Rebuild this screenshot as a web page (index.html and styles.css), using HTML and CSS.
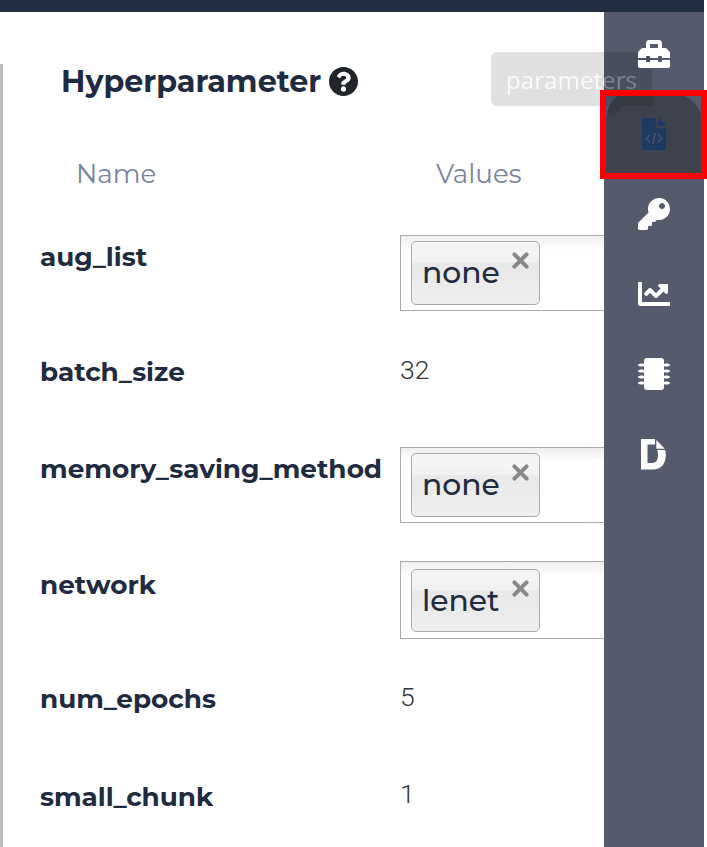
FILE: index.html
```
<!DOCTYPE html>
<html lang="en">
<head>
<meta charset="utf-8">
<title>Hyperparameter</title>
<link rel="stylesheet" href="styles.css">
</head>
<body>
<header class="topbar"></header>
<div class="shell">
  <main class="panel">
    <h1 class="title"><span class="title-text">Hyperparameter</span>
      <svg class="help" viewBox="8 8 496 496"><path d="M504 256c0 136.997-111.043 248-248 248S8 392.997 8 256C8 119.083 119.043 8 256 8s248 111.083 248 248zM262.655 90c-54.497 0-89.255 22.957-116.549 63.758-3.536 5.286-2.353 12.415 2.715 16.258l34.699 26.31c5.205 3.947 12.621 3.008 16.665-2.122 17.864-22.658 30.113-35.797 57.303-35.797 20.429 0 45.698 13.148 45.698 32.958 0 14.976-12.363 22.667-32.534 33.976C247.128 238.528 216 254.941 216 296v4c0 6.627 5.373 12 12 12h56c6.627 0 12-5.373 12-12v-1.333c0-28.462 83.186-29.647 83.186-106.667 0-58.002-60.165-102-116.531-102zM256 338c-25.365 0-46 20.635-46 46 0 25.364 20.635 46 46 46s46-20.636 46-46c0-25.365-20.635-46-46-46z"/></svg>
    </h1>
    <div class="row head"><div>Name</div><div>Values</div></div>
    <div class="row r-aug"><div class="name">aug_list</div><div class="select"><div class="chip">none<svg class="x" viewBox="0 0 17 17"><path d="M3 3l11 11M14 3L3 14"/></svg></div></div></div>
    <div class="row r-batch"><div class="name">batch_size</div><div class="num">32</div></div>
    <div class="row r-memory"><div class="name">memory_saving_method</div><div class="select"><div class="chip">none<svg class="x" viewBox="0 0 17 17"><path d="M3 3l11 11M14 3L3 14"/></svg></div></div></div>
    <div class="row r-network"><div class="name">network</div><div class="select"><div class="chip">lenet<svg class="x" viewBox="0 0 17 17"><path d="M3 3l11 11M14 3L3 14"/></svg></div></div></div>
    <div class="row r-epochs"><div class="name">num_epochs</div><div class="num">5</div></div>
    <div class="row r-chunk"><div class="name">small_chunk</div><div class="num">1</div></div>
  </main>
  <nav class="sidebar">
    <div class="item"><svg viewBox="0 0 512 512"><path d="M502.63 214.63l-45.25-45.25c-6-6-14.14-9.37-22.63-9.37H384V80c0-26.51-21.49-48-48-48H176c-26.51 0-48 21.49-48 48v80H77.25c-8.49 0-16.62 3.37-22.63 9.37L9.37 214.63c-6 6-9.37 14.14-9.37 22.63V320h128v-16c0-8.84 7.16-16 16-16h32c8.84 0 16 7.16 16 16v16h128v-16c0-8.84 7.16-16 16-16h32c8.84 0 16 7.16 16 16v16h128v-82.75c0-8.48-3.37-16.62-9.37-22.62zM320 160H192V96h128v64zm64 208c0 8.84-7.16 16-16 16h-32c-8.84 0-16-7.16-16-16v-16H192v16c0 8.84-7.16 16-16 16h-32c-8.84 0-16-7.16-16-16v-16H0v96c0 17.67 14.33 32 32 32h448c17.67 0 32-14.33 32-32v-96H384v16z"/></svg></div>
    <div class="item active"><svg viewBox="-64 0 512 512"><path d="M384 121.941V128H256V0h6.059c6.365 0 12.47 2.529 16.971 7.029l97.941 97.941A24.005 24.005 0 0 1 384 121.941zM248 160c-13.2 0-24-10.8-24-24V0H24C10.745 0 0 10.745 0 24v464c0 13.255 10.745 24 24 24h336c13.255 0 24-10.745 24-24V160H248z"/><path class="code" d="M126 270l-56 58 56 58M258 270l56 58-56 58M218 236l-50 180"/></svg></div>
    <div class="item"><svg viewBox="0 0 512 512"><path d="M512 176.001C512 273.203 433.202 352 336 352c-11.22 0-22.19-1.062-32.827-3.069l-24.012 27.014A23.999 23.999 0 0 1 261.223 384H224v40c0 13.255-10.745 24-24 24h-40v40c0 13.255-10.745 24-24 24H24c-13.255 0-24-10.745-24-24v-78.059c0-6.365 2.529-12.47 7.029-16.971l161.802-161.802C163.108 213.814 160 195.271 160 176 160 78.798 238.797.001 335.999 0 433.488-.001 512 78.511 512 176.001zM336 128c0 26.51 21.49 48 48 48s48-21.49 48-48-21.49-48-48-48-48 21.49-48 48z"/></svg></div>
    <div class="item"><svg viewBox="0 0 512 512"><path d="M496 384H64V80c0-8.84-7.16-16-16-16H16C7.16 64 0 71.16 0 80v336c0 17.67 14.33 32 32 32h464c8.84 0 16-7.16 16-16v-32c0-8.84-7.16-16-16-16zM464 96H345.94c-21.38 0-32.09 25.85-16.97 40.97l32.4 32.4L288 242.75l-73.37-73.37c-12.5-12.5-32.76-12.5-45.25 0l-68.69 68.69c-6.25 6.25-6.25 16.38 0 22.63l22.62 22.62c6.25 6.25 16.38 6.25 22.63 0L192 237.25l73.37 73.37c12.5 12.5 32.76 12.5 45.25 0l96-96 32.4 32.4c15.12 15.12 40.97 4.41 40.97-16.97V112c.01-8.84-7.15-16-15.99-16z"/></svg></div>
    <div class="item"><svg viewBox="0 0 512 512"><rect x="96" y="0" width="320" height="512" rx="48"/><path class="pins" d="M40 112h36M40 208h36M40 304h36M40 400h36M436 112h36M436 208h36M436 304h36M436 400h36"/><path class="tips" d="M8 112h40M8 208h40M8 304h40M8 400h40M464 112h40M464 208h40M464 304h40M464 400h40"/></svg></div>
    <div class="item"><svg viewBox="0 0 32 32"><path fill-rule="evenodd" d="M3 1h14v5.500H9.500v18.500H14c4 0 6-3 6-8 0-2-.3-3.600-.9-5h8c.5 1.500.7 3.200.7 5C27.800 26 23 31.500 15 31.500H3z"/><path d="M18.300 2l8.500 8.800h-8.500z"/></svg></div>
  </nav>
</div>
<div class="tooltip"><span>parameters</span></div>
<svg class="arrow" viewBox="0 0 46 22"><path d="M0 19Q1 8 10 1H46V11H16L6 21Q1 22 0 19z"/></svg>
<div class="highlight"></div>
</body>
</html>
```
FILE: styles.css
```
* { box-sizing: border-box; }
body {
  margin: 0;
  height: 847px;
  overflow: hidden;
  background: #fff;
  color: #1f2b40;
  font-family: Montserrat, Inter, sans-serif;
  position: relative;
}
.topbar { width: 704px; height: 12px; background: #222e42; }
.shell { display: flex; width: 704px; height: 835px; }
.panel { width: 604px; overflow: hidden; position: relative; }
.panel::before {
  content: "";
  position: absolute;
  left: 0;
  top: 52px;
  width: 3px;
  bottom: 0;
  background: #bababa;
}
.title {
  display: flex;
  align-items: center;
  height: 40px;
  margin: 49px 0 0 61px;
  font-size: 30.200px;
  font-weight: 700;
}
.title-text { width: 260px; margin-right: 8px; white-space: nowrap; }
.help { width: 29px; height: 29px; fill: #212529; flex: none; }
.row {
  display: grid;
  grid-template-columns: 360px 320px;
  margin-left: 40px;
  align-items: start;
}
.head {
  height: 132px;
  padding: 57px 0 0 36px;
  font-size: 26.200px;
  line-height: 32px;
  color: #7a83a0;
}
.name {
  padding-top: 8px;
  font-size: 26.300px;
  font-weight: 700;
  line-height: 32px;
  white-space: nowrap;
}
.r-aug { height: 115px; }
.r-batch { height: 97px; }
.r-memory { height: 116px; }
.r-network { height: 114px; }
.r-epochs { height: 98px; }
.num {
  padding-top: 6px;
  font: 300 26.500px/32px Roboto, sans-serif;
  color: #333;
}
.r-chunk .num { padding-top: 5px; }
.select {
  height: 76px;
  margin-top: 2px;
  padding: 5px 10px;
  border: 1.500px solid #aaa;
  background: linear-gradient(#eee, #fff 14px);
}
.chip {
  display: flex;
  width: 129px;
  height: 64px;
  padding: 0 9px 0 10px;
  justify-content: space-between;
  border: 1.500px solid #aaa;
  border-radius: 5px;
  background: linear-gradient(#f4f4f4 20%, #f0f0f0 33%, #e8e8e8 34%, #eee);
  font-size: 29.800px;
  font-weight: 500;
  line-height: 61px;
}
.r-network .select { height: 78px; margin-top: 0; padding-top: 7px; }
.r-network .chip { height: 63px; }
.x { width: 19px; height: 19px; margin-top: 9px; flex: none; stroke: #888; stroke-width: 3.600; stroke-linecap: round; }
.sidebar { width: 100px; padding-top: 2px; background: #555b6d; }
.item { display: flex; align-items: center; justify-content: center; height: 80px; }
.item svg { position: relative; z-index: 2; width: 32px; height: 32px; fill: #fff; }
.active { margin: 0 2px; background: #3e424c; border-radius: 28px 28px 0 0; }
.item.active svg { fill: #1e3a63; }
.code { fill: none; stroke: #46516a; stroke-width: 26; }
.pins { stroke: #fff; stroke-width: 48; stroke-linecap: round; }
.tips { stroke: #fff; stroke-width: 22; stroke-linecap: round; }
.tooltip {
  position: absolute;
  z-index: 1;
  left: 491px;
  top: 52px;
  width: 161px;
  height: 54px;
  border-radius: 6px;
  background: rgba(0, 0, 0, .12);
  font: 24.200px/55px "Open Sans", sans-serif;
  text-align: center;
}
.tooltip span {
  color: transparent;
  background: linear-gradient(90deg, rgba(255, 255, 255, .85) 98px, rgba(255, 255, 255, .3) 98px);
  background-clip: text;
  -webkit-background-clip: text;
}
.arrow {
  position: absolute;
  z-index: 1;
  left: 607px;
  top: 95px;
  width: 46px;
  height: 22px;
  fill: #363a43;
}
.highlight {
  position: absolute;
  z-index: 3;
  left: 600px;
  top: 90px;
  width: 107px;
  height: 89px;
  border: 6px solid #f00;
}
```
